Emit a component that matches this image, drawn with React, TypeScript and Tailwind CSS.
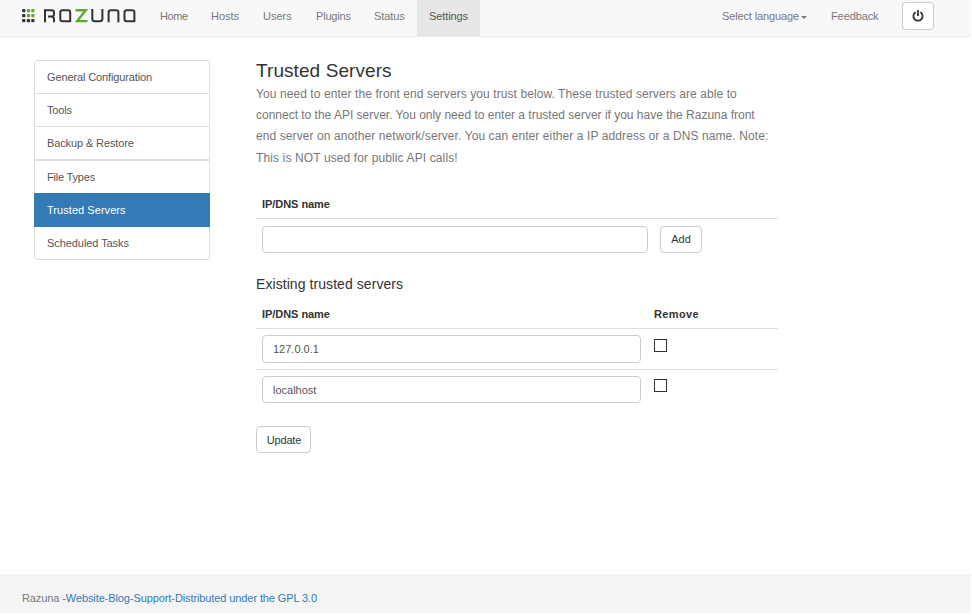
import React from "react";

const nav = [
  { label: "Home", cls: "w-[51px] tracking-[-0.4px]" },
  { label: "Hosts", cls: "w-[52px]" },
  { label: "Users", cls: "w-[53px]" },
  { label: "Plugins", cls: "w-[58px] tracking-[-0.2px]" },
  { label: "Status", cls: "w-[55px] tracking-[-0.1px]" },
];

const menu = [
  { label: "General Configuration", cls: "h-[33px] border-b tracking-[-0.12px]" },
  { label: "Tools", cls: "h-[33px] border-b tracking-[-0.2px]" },
  { label: "Backup & Restore", cls: "h-[34px] border-b-2 tracking-[-0.12px]" },
  { label: "File Types", cls: "h-[32px] tracking-[-0.2px]" },
  { label: "Trusted Servers", cls: "h-[34px] tracking-[0.05px]", active: true },
  { label: "Scheduled Tasks", cls: "h-[33px] border-b rounded-b tracking-[-0.07px]" },
];

const intro = [
  { text: "You need to enter the front end servers you trust below. These trusted servers are able to", cls: "h-[21px] tracking-[0.08px]" },
  { text: "connect to the API server. You only need to enter a trusted server if you have the Razuna front", cls: "h-[21px] tracking-[-0.01px]" },
  { text: "end server on another network/server. You can enter either a IP address or a DNS name. Note:", cls: "h-[22px] tracking-[0.09px]" },
  { text: "This is NOT used for public API calls!", cls: "h-[21px] tracking-[0.12px]" },
];

function Logo() {
  return (
    <svg width="116" height="16" viewBox="21 8 116 16" fill="none" className="shrink-0">
      {[10.5, 15.5, 20.5].map((y, r) =>
        [23.7, 28.4, 32.8].map((x, c) => (
          <rect key={`${r}${c}`} x={x - 1.6} y={y - 1.6} width="3.3" height="3.3" rx="0.9" fill={r < 2 && c > 0 ? "#5fa832" : "#333333"} />
        ))
      )}
      <g stroke="#333333" strokeWidth="2">
        <path d="M45 22.2V10.2H51.8Q54 10.2 54 12.2V14.6Q54 16.6 51.8 16.6H48M51.5 16.6Q54 17 54 19.2V22.2" />
        <path d="M70.2 22V12.4Q70.2 10.2 68 10.2H62.4Q60.3 10.2 60.3 12.4V19Q60.3 21.2 62.4 21.2H70.2" />
        <path d="M92.3 9V18.8Q92.3 21.2 94.7 21.2H100Q102.4 21.2 102.4 18.8V9" />
        <path d="M108.6 22.2V12.4Q108.6 10.2 110.8 10.2H116.2Q118.4 10.2 118.4 12.4V22.2" />
        <path d="M134.4 22V12.4Q134.4 10.2 132.2 10.2H126.7Q124.5 10.2 124.5 12.4V19Q124.5 21.2 126.7 21.2H134.4" />
      </g>
      <path d="M75.5 10.2H85.8L77.2 21.1H87.5" stroke="#5fa832" strokeWidth="2.4" />
    </svg>
  );
}

function Checkbox() {
  return <span role="checkbox" aria-checked="false" className="block size-[13px] border border-[#333] bg-white" />;
}

function ServerRow({ value, boxCls, checkCls }: { value: string; boxCls: string; checkCls: string }) {
  return (
    <div className="flex h-[41px] items-start border-t border-[#ddd] px-1.5 pt-1.5">
      <div className={`flex w-[379px] items-center rounded border border-[#ccc] bg-white pl-2.5 pt-px text-[#555] ${boxCls}`}>{value}</div>
      <div className={`ml-[13px] ${checkCls}`}>
        <Checkbox />
      </div>
    </div>
  );
}

export default function App() {
  return (
    <div className="h-[615px] w-[972px] overflow-hidden bg-white font-['Liberation_Sans',Arial,sans-serif] text-[11px] leading-[15px] text-[#333]">
      <div className="flex h-[613px] w-[971px] flex-col">
        <header className="flex h-[37px] shrink-0 items-start border-b border-[#e7e7e7] bg-[#f8f8f8] pl-[21px] text-[#777]">
          <div className="w-[139px] pt-2">
            <Logo />
          </div>
          <nav className="flex pt-[9px]">
            {nav.map((n) => (
              <a key={n.label} className={n.cls}>{n.label}</a>
            ))}
          </nav>
          <a className="-ml-[12px] h-[36px] w-[63px] bg-[#e7e7e7] pl-3 pt-[9px] tracking-[-0.1px] text-[#555]">Settings</a>
          <a className="ml-[242px] flex w-[109px] pt-[9px]">
            <span className="tracking-[-0.13px]">Select language</span>
            <span className="ml-[2px] mt-[7px] h-0 w-0 border-x-[3px] border-t-[3px] border-x-transparent border-t-[#777]" />
          </a>
          <a className="w-[71px] pt-[9px] tracking-[-0.1px]">Feedback</a>
          <button className="mt-[2px] flex h-[28px] w-[32px] items-center justify-center rounded border border-[#ccc] bg-white pb-px">
            <svg width="12" height="12" viewBox="0 0 12 12" fill="none" stroke="#333" strokeWidth="1.8">
              <path d="M3.6 2.2A4.6 4.6 0 1 0 8.4 2.2M6 0V6" />
            </svg>
          </button>
        </header>

        <main className="flex flex-1 items-start pl-[34px]">
          <aside className="mt-[23px] flex w-[176px] flex-col rounded-t border-t border-[#ddd] text-[#555]">
            {menu.map((m, i) => (
              <a
                key={m.label}
                className={`flex items-center border-x pl-3 ${m.cls} ${i === 0 ? "rounded-t" : ""} ${
                  m.active ? "border-[#337ab7] bg-[#337ab7] text-white" : "border-[#ddd]"
                }`}
              >
                {m.label}
              </a>
            ))}
          </aside>

          <section className="ml-[46px] w-[522px] pt-[23px]">
            <h1 className="text-[19px] leading-[22px] tracking-[0.08px]">Trusted Servers</h1>
            <div className="h-[108px] whitespace-nowrap pt-[2px] text-[12px] leading-[21px] text-[#777]">
              {intro.map((l) => (
                <p key={l.text} className={l.cls}>{l.text}</p>
              ))}
            </div>
            <div className="flex h-[29px] items-center border-b border-[#ddd] px-1.5 font-bold tracking-[-0.05px]">IP/DNS name</div>
            <div className="flex px-1.5 pt-[7px]">
              <div className="h-[27px] w-[386px] rounded border border-[#ccc] bg-white" />
              <button className="ml-3 h-[27px] w-[42px] rounded border border-[#ccc] bg-white">Add</button>
            </div>
            <h2 className="mt-[22px] text-[14px] leading-[18px] tracking-[0.07px]">Existing trusted servers</h2>
            <div className="flex h-[35px] items-center px-1.5 pt-[8px] font-bold">
              <span className="w-[392px] tracking-[-0.05px]">IP/DNS name</span>
              <span className="tracking-[0.35px]">Remove</span>
            </div>
            <ServerRow value="127.0.0.1" boxCls="h-[28px]" checkCls="pt-[4px]" />
            <ServerRow value="localhost" boxCls="h-[27px]" checkCls="pt-[3px]" />
            <button className="mt-4 h-[27px] w-[55px] rounded border border-[#ccc] bg-white pl-px pt-px tracking-[-0.2px]">Update</button>
          </section>
        </main>

        <footer className="h-[39px] shrink-0 bg-[#f4f4f4] pl-[22px] pt-[17px] tracking-[-0.1px] text-[#777]">
          Razuna -<a className="text-[#337ab7]">Website</a>-<a className="text-[#337ab7]">Blog</a>-<a className="text-[#337ab7]">Support</a>-<a className="text-[#337ab7]">Distributed under the GPL 3.0</a>
        </footer>
      </div>
    </div>
  );
}
